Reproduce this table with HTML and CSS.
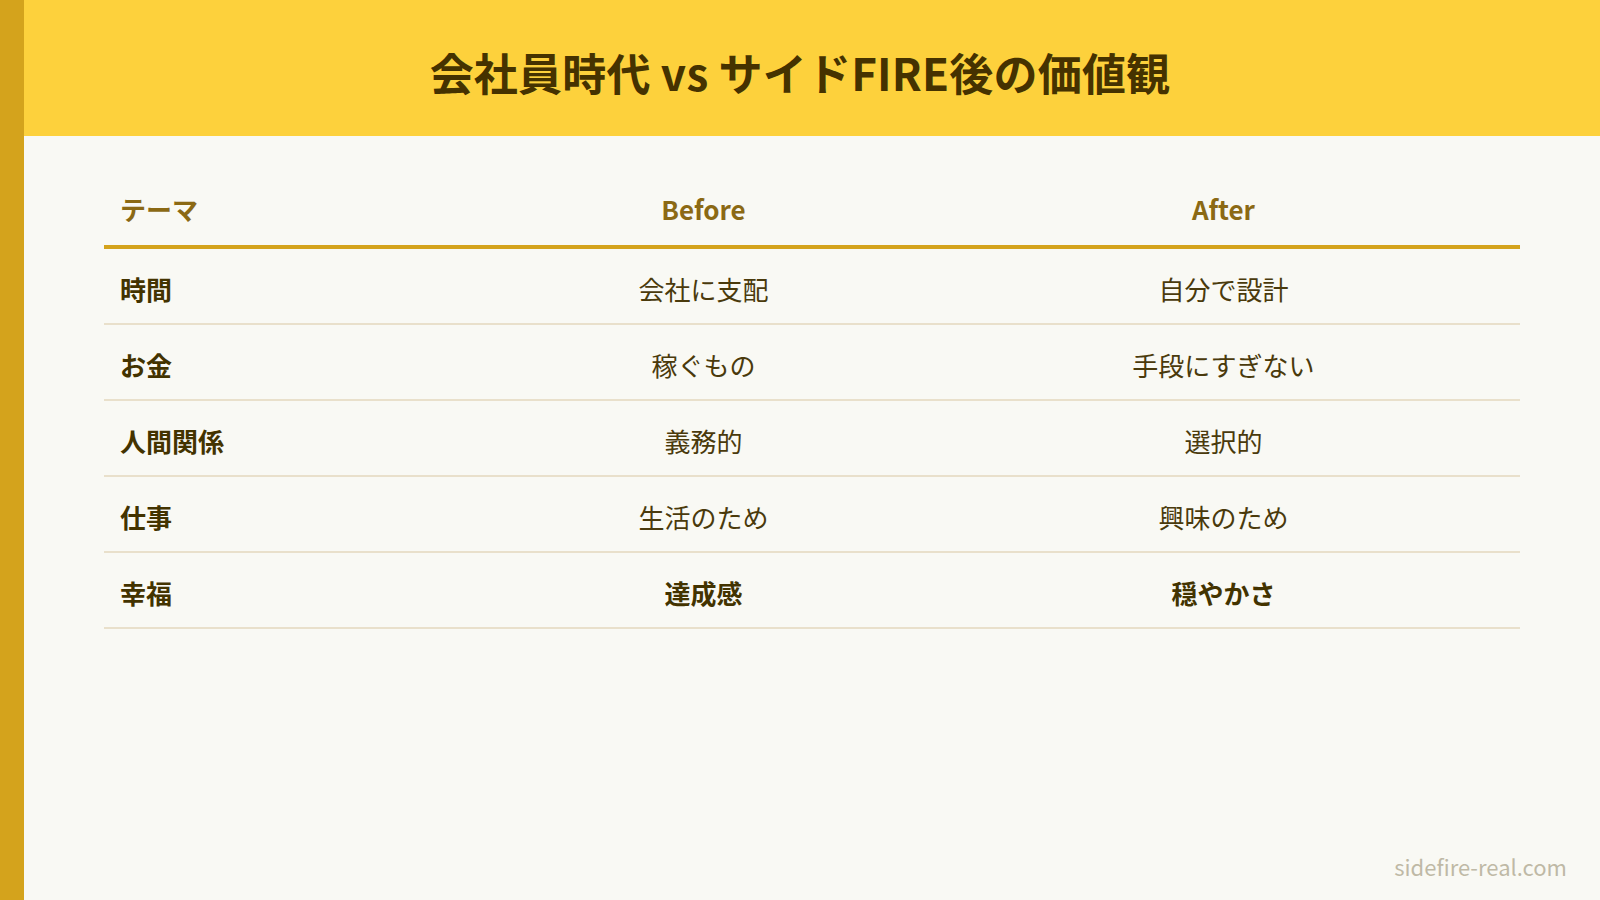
FILE: index.html
```html
<!DOCTYPE html>
<html lang="ja">
<head>
<meta charset="utf-8">
<title>会社員時代 vs サイドFIRE後の価値観</title>
<link rel="stylesheet" href="styles.css">
</head>
<body>
<div class="slide">
  <div class="accent"></div>
  <header class="hero">
    <h1 class="hero-title">会社員時代 vs サイドFIRE後の価値観</h1>
  </header>
  <main class="content">
    <table class="compare">
      <colgroup>
        <col class="col-theme">
        <col class="col-before">
        <col class="col-after">
      </colgroup>
      <thead>
        <tr>
          <th class="th-theme">テーマ</th>
          <th>Before</th>
          <th>After</th>
        </tr>
      </thead>
      <tbody>
        <tr>
          <td class="theme">時間</td>
          <td>会社に支配</td>
          <td>自分で設計</td>
        </tr>
        <tr>
          <td class="theme">お金</td>
          <td>稼ぐもの</td>
          <td>手段にすぎない</td>
        </tr>
        <tr>
          <td class="theme">人間関係</td>
          <td>義務的</td>
          <td>選択的</td>
        </tr>
        <tr>
          <td class="theme">仕事</td>
          <td>生活のため</td>
          <td>興味のため</td>
        </tr>
        <tr class="highlight">
          <td class="theme">幸福</td>
          <td>達成感</td>
          <td>穏やかさ</td>
        </tr>
      </tbody>
    </table>
  </main>
  <footer class="site">sidefire-real.com</footer>
</div>
</body>
</html>
```

FILE: styles.css
```css
html, body {
  margin: 0;
  padding: 0;
}

body {
  font-family: "Noto Sans CJK JP", "Noto Sans", sans-serif;
  background: #f9f9f4;
  color: #4a3a0c;
}

.slide {
  position: relative;
  width: 1600px;
  height: 900px;
  display: flex;
  flex-direction: column;
  background: #f9f9f4;
  overflow: hidden;
}

.accent {
  position: absolute;
  left: 0;
  top: 0;
  bottom: 0;
  width: 24px;
  background: #d4a31c;
  z-index: 2;
}

.hero {
  background: #fdd13c;
  padding: 39px 0 31px;
  text-align: center;
}

.hero-title {
  margin: 0;
  font-size: 44px;
  letter-spacing: 0.2px;
  line-height: 66px;
  font-weight: 700;
  color: #453200;
}

.content {
  flex: 1;
  padding: 36px 80px 0 104px;
}

.compare {
  width: 100%;
  border-collapse: collapse;
  table-layout: fixed;
}

.col-theme { width: 376px; }
.col-before { width: 447px; }
.col-after { width: 593px; }

.compare th {
  font-size: 26px;
  line-height: 40px;
  font-weight: 700;
  color: #8b6914;
  padding: 17px 16px 16px;
  text-align: center;
  border-bottom: 4px solid #d4a31c;
}

.compare th.th-theme {
  text-align: left;
}

.compare td {
  font-size: 26px;
  line-height: 40px;
  font-weight: 400;
  padding: 20px 16px 14px;
  text-align: center;
  border-bottom: 2px solid #e9e0cb;
  color: #4a3a0c;
}

.compare td.theme {
  text-align: left;
  font-weight: 700;
  color: #433300;
}

.compare tr.highlight td {
  font-weight: 700;
  color: #433300;
}

.site {
  align-self: flex-end;
  padding: 0 33px 17px 0;
  font-size: 22px;
  line-height: 33px;
  color: #bfb9a6;
}
```
